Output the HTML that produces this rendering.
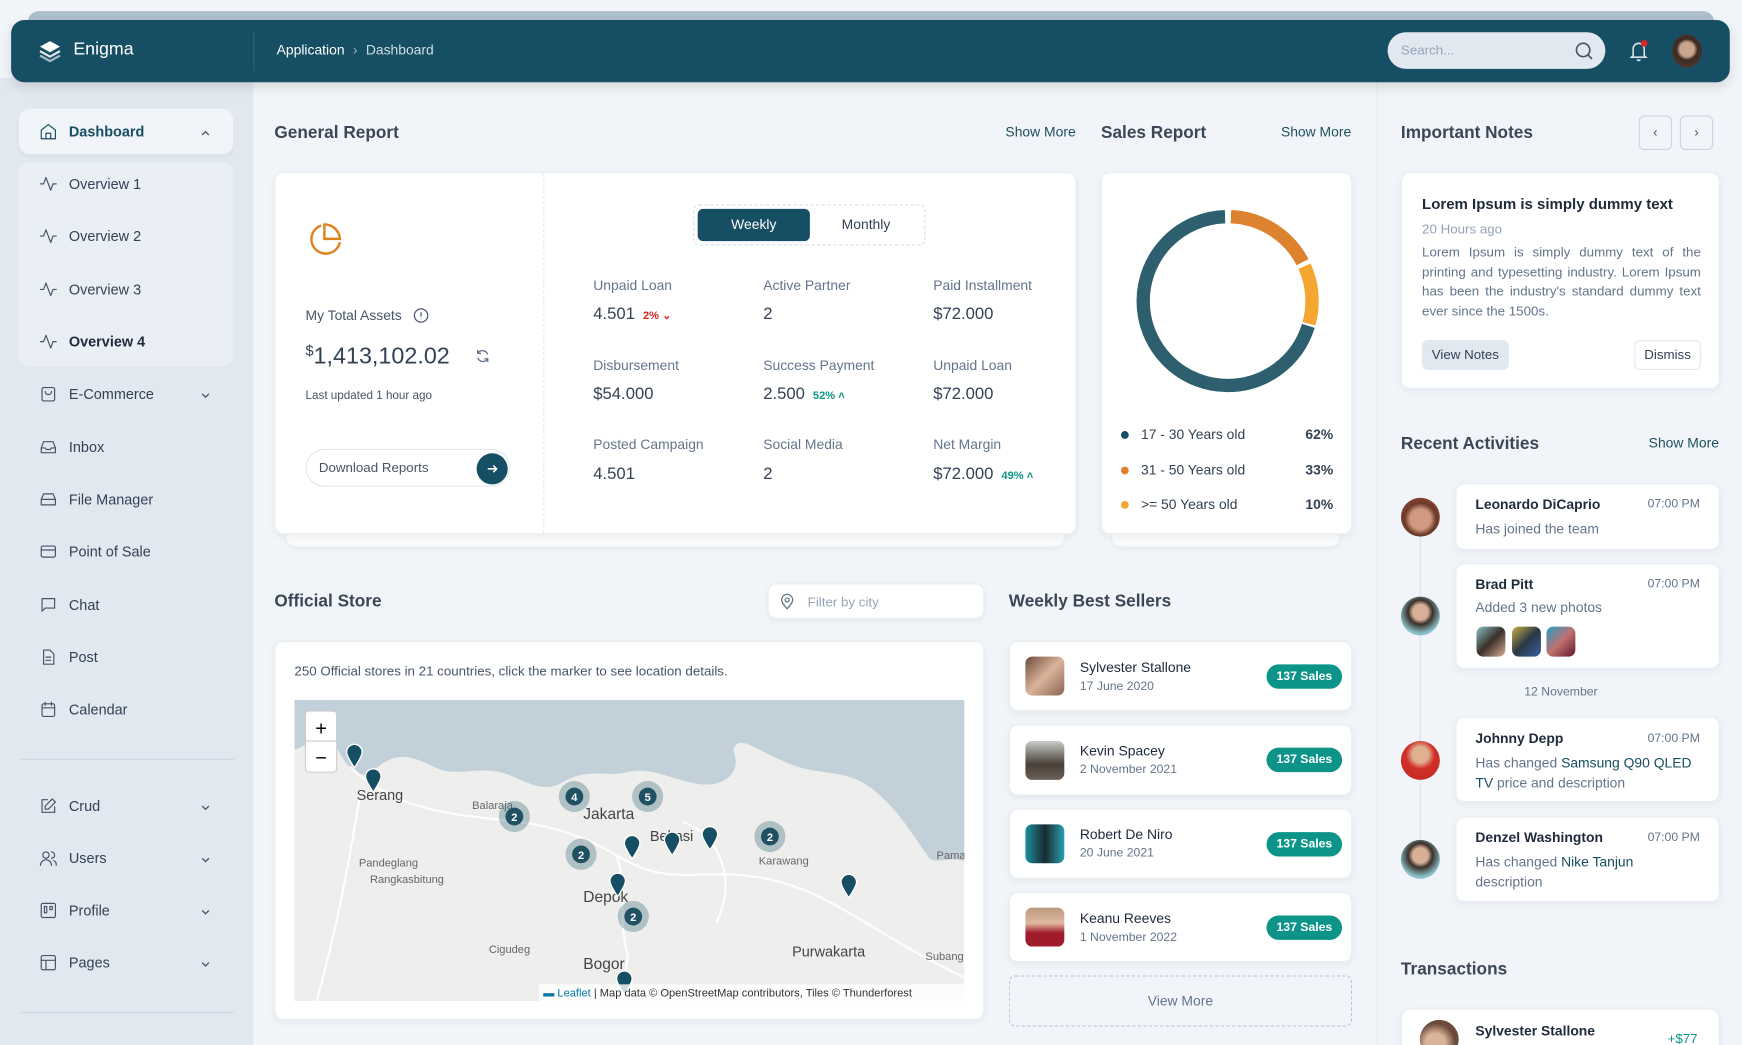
<!DOCTYPE html>
<html><head><meta charset="utf-8">
<style>
*{box-sizing:border-box;margin:0;padding:0}
html,body{width:1742px;height:1045px;overflow:hidden;background:#f1f5f9}
body{font-family:"Liberation Sans",sans-serif;color:#334155}
#s{position:absolute;left:0;top:0;width:1568px;height:941px;overflow:hidden;transform:scale(1.11097);transform-origin:0 0;background:#f1f5f9}
.a{position:absolute}
.card{position:absolute;background:#fff;border-radius:8px;box-shadow:0 2px 6px rgba(30,41,59,.06);border:1px solid #e9eef3}
.nav{position:absolute;left:35px;font-size:13px;color:#334155;display:flex;align-items:center;gap:10px}
.nav svg{width:17px;height:17px;fill:none;stroke:#475569;stroke-width:1.5;stroke-linecap:round;stroke-linejoin:round}
.chev{position:absolute;left:180px;width:10px;height:10px}
.h{font-size:15.5px;font-weight:bold;color:#3b4656}
.lnk{font-size:12.5px;color:#1e4e5f}
.lbl{font-size:12.5px;color:#64748b}
.val{font-size:15px;color:#334155}
.badge{position:absolute;background:#0d9488;color:#fff;font-size:11px;font-weight:bold;border-radius:12px;padding:5px 9px}
.av{position:absolute;border-radius:50%;overflow:hidden}
.ph{position:absolute;border-radius:6px}
</style></head><body>
<div id="s">
<div class="a" style="left:25px;top:10px;width:1518px;height:20px;background:#adbfca;border-radius:12px"></div>
<div class="a" style="left:0;top:70px;width:228px;height:871px;background:#e2e8f0"></div>
<div class="a" style="left:1239px;top:74px;width:1px;height:867px;background:#e5eaf0"></div>
<div class="a" style="left:10px;top:18px;width:1547px;height:56px;background:#164e63;border-radius:12px;box-shadow:0 4px 10px rgba(0,0,0,.12)"></div>
<svg class="a" style="left:34px;top:35px" width="22" height="22" viewBox="0 0 22 22"><path d="M11 2 L20 7 L11 12 L2 7Z" fill="#fff"/><path d="M2 11 L11 16 L20 11" stroke="#dfe7ea" stroke-width="2" fill="none"/><path d="M2 15 L11 20 L20 15" stroke="#a9bcc4" stroke-width="2" fill="none"/></svg>
<div class="a" style="left:66px;top:36px;font-size:16px;color:#fff">Enigma</div>
<div class="a" style="left:228px;top:28px;width:1px;height:36px;background:#2f6577"></div>
<div class="a" style="left:249px;top:38px;font-size:12.5px;color:#fff">Application <span style="color:#9fb6c0;margin:0 4px">›</span> <span style="color:#d2dde2">Dashboard</span></div>
<div class="a" style="left:1249px;top:29px;width:196px;height:33px;background:#e2e8f0;border-radius:17px"></div>
<div class="a" style="left:1261px;top:38px;font-size:12px;color:#94a3b8">Search...</div>
<svg class="a" style="left:1417px;top:37px" width="18" height="18" viewBox="0 0 18 18" fill="none" stroke="#475569" stroke-width="1.5"><circle cx="8" cy="8" r="6"/><path d="M12.5 12.5 L16 16"/></svg>
<svg class="a" style="left:1466px;top:36px" width="18" height="20" viewBox="0 0 18 20" fill="none" stroke="#dbe5ea" stroke-width="1.4"><path d="M4 14 V8 a5 5 0 0 1 10 0 V14 L15.5 15.5 H2.5Z"/><path d="M7.5 17.5 a1.7 1.7 0 0 0 3 0"/></svg>
<div class="a" style="left:1477px;top:36px;width:6px;height:6px;border-radius:50%;background:#dc2626"></div>
<div class="av" style="left:1505px;top:31px;width:27px;height:30px;background:radial-gradient(circle at 50% 45%,#caa48e 0 30%,#3b2a22 45%,#5a4436 100%)"></div>

<div class="a" style="left:17px;top:98px;width:193px;height:41px;background:#f1f5f9;border-radius:10px;box-shadow:0 2px 4px rgba(0,0,0,.04)"></div>
<div class="a" style="left:17px;top:146px;width:193px;height:184px;background:#eaeff5;border-radius:10px"></div>
<div class="nav" style="top:110px;color:#164e63;font-weight:bold"><svg viewBox="0 0 24 24" style="stroke:#164e63"><path d="M3 10 L12 3 L21 10 V21 H3Z"/><path d="M9 21 V14 H15 V21"/></svg>Dashboard</div>
<svg class="chev" style="top:115px" viewBox="0 0 10 10" fill="none" stroke="#475569" stroke-width="1.2"><path d="M2 6.5 L5 3.5 L8 6.5"/></svg>
<div class="nav" style="top:157px"><svg viewBox="0 0 24 24"><path d="M2 12 H6 L9 4 L15 20 L18 12 H22"/></svg>Overview 1</div>
<div class="nav" style="top:204px"><svg viewBox="0 0 24 24"><path d="M2 12 H6 L9 4 L15 20 L18 12 H22"/></svg>Overview 2</div>
<div class="nav" style="top:252px"><svg viewBox="0 0 24 24"><path d="M2 12 H6 L9 4 L15 20 L18 12 H22"/></svg>Overview 3</div>
<div class="nav" style="top:299px;font-weight:bold;color:#1e293b"><svg viewBox="0 0 24 24"><path d="M2 12 H6 L9 4 L15 20 L18 12 H22"/></svg>Overview 4</div>
<div class="nav" style="top:346px"><svg viewBox="0 0 24 24"><rect x="4" y="4" width="16" height="17" rx="2"/><path d="M8 9 a4 4 0 0 0 8 0"/></svg>E-Commerce</div>
<svg class="chev" style="top:351px" viewBox="0 0 10 10" fill="none" stroke="#475569" stroke-width="1.2"><path d="M2 3.5 L5 6.5 L8 3.5"/></svg>
<div class="nav" style="top:394px"><svg viewBox="0 0 24 24"><path d="M3 13 L6 5 H18 L21 13 V19 H3Z"/><path d="M3 13 H8 L9.5 15 H14.5 L16 13 H21"/></svg>Inbox</div>
<div class="nav" style="top:441px"><svg viewBox="0 0 24 24"><path d="M3 12 L6 5 H18 L21 12 V19 H3Z M3 12 H21"/></svg>File Manager</div>
<div class="nav" style="top:488px"><svg viewBox="0 0 24 24"><rect x="3" y="5" width="18" height="14" rx="2"/><path d="M3 10 H21"/></svg>Point of Sale</div>
<div class="nav" style="top:536px"><svg viewBox="0 0 24 24"><path d="M4 4 H20 V16 H8 L4 20Z"/></svg>Chat</div>
<div class="nav" style="top:583px"><svg viewBox="0 0 24 24"><path d="M6 3 H14 L19 8 V21 H6Z M9 12 H15 M9 16 H15"/></svg>Post</div>
<div class="nav" style="top:630px"><svg viewBox="0 0 24 24"><rect x="4" y="5" width="16" height="16" rx="2"/><path d="M4 10 H20 M8 3 V7 M16 3 V7"/></svg>Calendar</div>
<div class="a" style="left:18px;top:683px;width:193px;height:1px;background:#cfd8e3"></div>
<div class="nav" style="top:717px"><svg viewBox="0 0 24 24"><path d="M20 13 V20 H4 V4 H11"/><path d="M17 3 L21 7 L12 16 H8 V12Z"/></svg>Crud</div>
<svg class="chev" style="top:722px" viewBox="0 0 10 10" fill="none" stroke="#475569" stroke-width="1.2"><path d="M2 3.5 L5 6.5 L8 3.5"/></svg>
<div class="nav" style="top:764px"><svg viewBox="0 0 24 24"><circle cx="9" cy="8" r="4"/><path d="M2 21 a7 7 0 0 1 14 0 M16 4 a4 4 0 0 1 0 8 M19 15 a6 6 0 0 1 3 6"/></svg>Users</div>
<svg class="chev" style="top:769px" viewBox="0 0 10 10" fill="none" stroke="#475569" stroke-width="1.2"><path d="M2 3.5 L5 6.5 L8 3.5"/></svg>
<div class="nav" style="top:811px"><svg viewBox="0 0 24 24"><rect x="3" y="3" width="18" height="18" rx="2"/><path d="M7 7 V15 H10 V7Z M14 7 V11 H17 V7Z"/></svg>Profile</div>
<svg class="chev" style="top:816px" viewBox="0 0 10 10" fill="none" stroke="#475569" stroke-width="1.2"><path d="M2 3.5 L5 6.5 L8 3.5"/></svg>
<div class="nav" style="top:858px"><svg viewBox="0 0 24 24"><rect x="3" y="3" width="18" height="18" rx="2"/><path d="M3 9 H21 M9 9 V21"/></svg>Pages</div>
<svg class="chev" style="top:863px" viewBox="0 0 10 10" fill="none" stroke="#475569" stroke-width="1.2"><path d="M2 3.5 L5 6.5 L8 3.5"/></svg>
<div class="a" style="left:18px;top:911px;width:193px;height:1px;background:#cfd8e3"></div>

<div class="a h" style="left:247px;top:111px">General Report</div>
<div class="a lnk" style="left:905px;top:112px">Show More</div>
<div class="a" style="left:258px;top:470px;width:700px;height:22px;background:#f8fafc;border-radius:8px;box-shadow:0 2px 4px rgba(0,0,0,.05)"></div>
<div class="card" style="left:247px;top:155px;width:722px;height:326px"></div>
<div class="a" style="left:489px;top:156px;width:0;height:324px;border-left:1px dashed #e2e8f0"></div>
<svg class="a" style="left:276px;top:199px" width="34" height="34" viewBox="0 0 34 34" fill="none" stroke="#e0821e" stroke-width="2.2"><path d="M13 4 A13 13 0 1 0 30 19"/><path d="M16 3 A14 14 0 0 1 30 16 H16Z"/></svg>
<div class="a" style="left:275px;top:277px;font-size:12.5px;color:#475569">My Total Assets</div>
<svg class="a" style="left:372px;top:277px" width="14" height="14" viewBox="0 0 14 14" fill="none" stroke="#475569" stroke-width="1.1"><circle cx="7" cy="7" r="6"/><path d="M7 4 V8 M7 9.8 V10.3"/></svg>
<div class="a" style="left:275px;top:308px;font-size:21px;color:#334155"><sup style="font-size:13px;vertical-align:7px">$</sup>1,413,102.02</div>
<svg class="a" style="left:427px;top:313px" width="15" height="15" viewBox="0 0 15 15" fill="none" stroke="#64748b" stroke-width="1.2"><path d="M12 6 A5 5 0 0 0 3 5 M3 2 V5 H6 M3 9 A5 5 0 0 0 12 10 M12 13 V10 H9"/></svg>
<div class="a" style="left:275px;top:350px;font-size:10.5px;color:#475569">Last updated 1 hour ago</div>
<div class="a" style="left:275px;top:404px;width:184px;height:34px;border:1px solid #e2e8f0;border-radius:17px"></div>
<div class="a" style="left:287px;top:414px;font-size:12px;color:#475569">Download Reports</div>
<div class="a" style="left:429px;top:408px;width:28px;height:28px;border-radius:50%;background:#164e63"></div>
<svg class="a" style="left:437px;top:416px" width="12" height="12" viewBox="0 0 12 12" fill="none" stroke="#fff" stroke-width="1.4"><path d="M2 6 H10 M7 3 L10 6 L7 9"/></svg>
<div class="a" style="left:624px;top:184px;width:209px;height:37px;border:1px dashed #d6dee8;border-radius:5px"></div>
<div class="a" style="left:628px;top:188px;width:101px;height:29px;background:#164e63;border-radius:5px;color:#fff;font-size:12.5px;text-align:center;line-height:29px">Weekly</div>
<div class="a" style="left:729px;top:188px;width:101px;height:29px;color:#334155;font-size:12.5px;text-align:center;line-height:29px">Monthly</div>

<div class="a lbl" style="left:534px;top:250px">Unpaid Loan</div>
<div class="a val" style="left:534px;top:274px">4.501 <span style="color:#dc2626;font-size:10px;font-weight:bold;margin-left:3px">2% ⌄</span></div>
<div class="a lbl" style="left:687px;top:250px">Active Partner</div>
<div class="a val" style="left:687px;top:274px">2</div>
<div class="a lbl" style="left:840px;top:250px">Paid Installment</div>
<div class="a val" style="left:840px;top:274px">$72.000</div>
<div class="a lbl" style="left:534px;top:322px">Disbursement</div>
<div class="a val" style="left:534px;top:346px">$54.000</div>
<div class="a lbl" style="left:687px;top:322px">Success Payment</div>
<div class="a val" style="left:687px;top:346px">2.500 <span style="color:#0d9488;font-size:10px;font-weight:bold;margin-left:3px">52% ˄</span></div>
<div class="a lbl" style="left:840px;top:322px">Unpaid Loan</div>
<div class="a val" style="left:840px;top:346px">$72.000</div>
<div class="a lbl" style="left:534px;top:393px">Posted Campaign</div>
<div class="a val" style="left:534px;top:418px">4.501</div>
<div class="a lbl" style="left:687px;top:393px">Social Media</div>
<div class="a val" style="left:687px;top:418px">2</div>
<div class="a lbl" style="left:840px;top:393px">Net Margin</div>
<div class="a val" style="left:840px;top:418px">$72.000 <span style="color:#0d9488;font-size:10px;font-weight:bold;margin-left:3px">49% ˄</span></div>

<div class="a h" style="left:991px;top:111px">Sales Report</div>
<div class="a lnk" style="left:1153px;top:112px">Show More</div>
<div class="a" style="left:1001px;top:470px;width:205px;height:22px;background:#f8fafc;border-radius:8px;box-shadow:0 2px 4px rgba(0,0,0,.05)"></div>
<div class="card" style="left:991px;top:155px;width:226px;height:326px"></div>
<svg class="a" style="left:1020px;top:186px" width="170" height="170" viewBox="0 0 170 170">
<g transform="rotate(-90 85 85)" fill="none" stroke-width="12">
<circle cx="85" cy="85" r="76" stroke="#2d5f6e" stroke-dasharray="333 478" stroke-dashoffset="-142"/>
<circle cx="85" cy="85" r="76" stroke="#dd8330" stroke-dasharray="80 478" stroke-dashoffset="-3"/>
<circle cx="85" cy="85" r="76" stroke="#f5a631" stroke-dasharray="53 478" stroke-dashoffset="-87"/>
</g></svg>
<div class="a" style="left:1009px;top:388px;width:7px;height:7px;border-radius:50%;background:#164e63"></div>
<div class="a" style="left:1027px;top:384px;font-size:12.5px">17 - 30 Years old</div>
<div class="a" style="left:1175px;top:384px;font-size:12.5px;font-weight:bold">62%</div>
<div class="a" style="left:1009px;top:420px;width:7px;height:7px;border-radius:50%;background:#dd8330"></div>
<div class="a" style="left:1027px;top:416px;font-size:12.5px">31 - 50 Years old</div>
<div class="a" style="left:1175px;top:416px;font-size:12.5px;font-weight:bold">33%</div>
<div class="a" style="left:1009px;top:451px;width:7px;height:7px;border-radius:50%;background:#f5a631"></div>
<div class="a" style="left:1027px;top:447px;font-size:12.5px">&gt;= 50 Years old</div>
<div class="a" style="left:1175px;top:447px;font-size:12.5px;font-weight:bold">10%</div>

<div class="a h" style="left:247px;top:533px">Official Store</div>
<div class="card" style="left:691px;top:525px;width:195px;height:32px"></div>
<svg class="a" style="left:702px;top:534px" width="13" height="15" viewBox="0 0 13 15" fill="none" stroke="#64748b" stroke-width="1.1"><path d="M6.5 14 C2 9 1.5 7.5 1.5 6 a5 5 0 0 1 10 0 c0 1.5-.5 3-5 8Z"/><circle cx="6.5" cy="6" r="1.8"/></svg>
<div class="a" style="left:727px;top:535px;font-size:12px;color:#94a3b8">Filter by city</div>
<div class="card" style="left:247px;top:577px;width:639px;height:341px"></div>
<div class="a" style="left:265px;top:597px;font-size:12px;color:#475569">250 Official stores in 21 countries, click the marker to see location details.</div>
<svg class="a" style="left:265px;top:630px" width="603" height="271" viewBox="0 0 603 271">
<rect width="603" height="271" fill="#eeeeec"/>
<path d="M0 0 H603 V145 C585 140 575 150 570 140 C555 120 545 100 520 80 C495 60 470 70 440 55 C415 45 400 30 395 45 C405 70 380 80 360 75 C335 70 320 60 300 65 C280 70 265 60 240 75 C220 85 205 70 185 65 C160 60 145 70 125 60 C105 50 90 45 70 65 C55 75 40 50 35 35 C25 25 15 40 0 45Z" fill="#c1d0d9"/>
<g stroke="#fff" stroke-width="2" fill="none" opacity=".9"><path d="M50 60 C80 90 120 100 160 105 S240 110 290 140 S360 150 420 160 S520 210 603 250"/><path d="M290 140 C300 170 290 190 300 230 L295 271"/><path d="M60 80 C50 140 40 200 20 271"/><path d="M350 110 C380 120 400 160 380 200"/></g>
<g font-family="Liberation Sans,sans-serif" fill="#444"><text x="56" y="90" font-size="13">Serang</text><text x="260" y="107" font-size="14">Jakarta</text><text x="320" y="127" font-size="13">Bekasi</text><text x="260" y="182" font-size="14">Depok</text><text x="260" y="242" font-size="14">Bogor</text><text x="448" y="231" font-size="13">Purwakarta</text><text x="160" y="98" font-size="10" fill="#666">Balaraja</text><text x="58" y="150" font-size="10" fill="#666">Pandeglang</text><text x="68" y="165" font-size="10" fill="#666">Rangkasbitung</text><text x="175" y="228" font-size="10" fill="#666">Cigudeg</text><text x="418" y="148" font-size="10" fill="#666">Karawang</text><text x="578" y="143" font-size="10" fill="#666">Pama</text><text x="568" y="234" font-size="10" fill="#666">Subang</text></g>
<g fill="#3c6e80"><circle cx="198" cy="105" r="14" opacity=".35"/><circle cx="252" cy="87" r="14" opacity=".35"/><circle cx="318" cy="87" r="14" opacity=".35"/><circle cx="258" cy="139" r="14" opacity=".35"/><circle cx="428" cy="123" r="14" opacity=".35"/><circle cx="305" cy="195" r="14" opacity=".35"/></g>
<g fill="#1f5163"><circle cx="198" cy="105" r="8"/><circle cx="252" cy="87" r="8"/><circle cx="318" cy="87" r="8"/><circle cx="258" cy="139" r="8"/><circle cx="428" cy="123" r="8"/><circle cx="305" cy="195" r="8"/></g>
<g fill="#fff" font-family="Liberation Sans,sans-serif" font-size="10" font-weight="bold" text-anchor="middle"><text x="198" y="109">2</text><text x="252" y="91">4</text><text x="318" y="91">5</text><text x="258" y="143">2</text><text x="428" y="127">2</text><text x="305" y="199">2</text></g>
<g fill="#164e63" stroke="#fff" stroke-width="1.2"><path d="M54 40 a7 7 0 0 1 7 7 c0 4-7 14-7 14 s-7-10-7-14 a7 7 0 0 1 7-7Z"/><path d="M71 62 a7 7 0 0 1 7 7 c0 4-7 14-7 14 s-7-10-7-14 a7 7 0 0 1 7-7Z"/><path d="M304 122 a7 7 0 0 1 7 7 c0 4-7 14-7 14 s-7-10-7-14 a7 7 0 0 1 7-7Z"/><path d="M340 119 a7 7 0 0 1 7 7 c0 4-7 14-7 14 s-7-10-7-14 a7 7 0 0 1 7-7Z"/><path d="M374 114 a7 7 0 0 1 7 7 c0 4-7 14-7 14 s-7-10-7-14 a7 7 0 0 1 7-7Z"/><path d="M291 156 a7 7 0 0 1 7 7 c0 4-7 14-7 14 s-7-10-7-14 a7 7 0 0 1 7-7Z"/><path d="M499 157 a7 7 0 0 1 7 7 c0 4-7 14-7 14 s-7-10-7-14 a7 7 0 0 1 7-7Z"/><path d="M297 244 a7 7 0 0 1 7 7 c0 4-7 14-7 14 s-7-10-7-14 a7 7 0 0 1 7-7Z"/></g>
<rect x="10" y="10" width="28" height="55" rx="3" fill="#fff" stroke="#ccc"/><line x1="10" y1="37" x2="38" y2="37" stroke="#ccc"/>
<text x="24" y="32" font-family="Liberation Sans,sans-serif" font-size="18" text-anchor="middle" fill="#000">+</text><text x="24" y="58" font-family="Liberation Sans,sans-serif" font-size="18" text-anchor="middle" fill="#000">−</text>
<rect x="220" y="256" width="383" height="15" fill="#fff" opacity=".8"/>
<text x="224" y="267" font-family="Liberation Sans,sans-serif" font-size="10" fill="#333"><tspan fill="#0078a8">▬ Leaflet</tspan> | Map data © OpenStreetMap contributors, Tiles © Thunderforest</text>
</svg>

<div class="a h" style="left:908px;top:533px">Weekly Best Sellers</div>
<div class="card" style="left:908px;top:577px;width:309px;height:63px"></div>
<div class="ph" style="left:923px;top:591px;width:35px;height:35px;background:linear-gradient(135deg,#6b4a3a,#d9b39a 50%,#8a6450)"></div>
<div class="a" style="left:972px;top:594px;font-size:12.5px;color:#1e293b">Sylvester Stallone</div>
<div class="a" style="left:972px;top:612px;font-size:11px;color:#64748b">17 June 2020</div>
<div class="badge" style="left:1140px;top:598px">137 Sales</div>
<div class="card" style="left:908px;top:652px;width:309px;height:64px"></div>
<div class="ph" style="left:923px;top:667px;width:35px;height:35px;background:linear-gradient(180deg,#c8ccc8,#4a4038 60%,#6a6058)"></div>
<div class="a" style="left:972px;top:669px;font-size:12.5px;color:#1e293b">Kevin Spacey</div>
<div class="a" style="left:972px;top:687px;font-size:11px;color:#64748b">2 November 2021</div>
<div class="badge" style="left:1140px;top:673px">137 Sales</div>
<div class="card" style="left:908px;top:728px;width:309px;height:63px"></div>
<div class="ph" style="left:923px;top:742px;width:35px;height:35px;background:linear-gradient(90deg,#1b8fa0,#1a2a30 50%,#2aa0b0)"></div>
<div class="a" style="left:972px;top:744px;font-size:12.5px;color:#1e293b">Robert De Niro</div>
<div class="a" style="left:972px;top:762px;font-size:11px;color:#64748b">20 June 2021</div>
<div class="badge" style="left:1140px;top:749px">137 Sales</div>
<div class="card" style="left:908px;top:803px;width:309px;height:63px"></div>
<div class="ph" style="left:923px;top:817px;width:35px;height:35px;background:linear-gradient(180deg,#b89a80,#e0b8a0 40%,#a01c2c 65%)"></div>
<div class="a" style="left:972px;top:820px;font-size:12.5px;color:#1e293b">Keanu Reeves</div>
<div class="a" style="left:972px;top:838px;font-size:11px;color:#64748b">1 November 2022</div>
<div class="badge" style="left:1140px;top:824px">137 Sales</div>
<div class="a" style="left:908px;top:878px;width:309px;height:46px;border:1px dashed #b8c4d2;border-radius:6px;text-align:center;line-height:44px;font-size:12.5px;color:#64748b">View More</div>

<div class="a h" style="left:1261px;top:111px">Important Notes</div>
<div class="a" style="left:1475px;top:104px;width:30px;height:31px;border:1px solid #cbd5e1;border-radius:5px;text-align:center;line-height:29px;font-size:12px;color:#475569">‹</div>
<div class="a" style="left:1512px;top:104px;width:30px;height:31px;border:1px solid #cbd5e1;border-radius:5px;text-align:center;line-height:29px;font-size:12px;color:#475569">›</div>
<div class="card" style="left:1261px;top:155px;width:287px;height:195px"></div>
<div class="a" style="left:1280px;top:176px;font-size:13.5px;font-weight:bold;color:#1e293b">Lorem Ipsum is simply dummy text</div>
<div class="a" style="left:1280px;top:199px;font-size:12px;color:#94a3b8">20 Hours ago</div>
<div class="a" style="left:1280px;top:219px;width:251px;font-size:12px;line-height:17.5px;color:#64748b;text-align:justify">Lorem Ipsum is simply dummy text of the printing and typesetting industry. Lorem Ipsum has been the industry's standard dummy text ever since the 1500s.</div>
<div class="a" style="left:1280px;top:306px;width:78px;height:27px;background:#e2e8f0;border-radius:5px;text-align:center;line-height:27px;font-size:12px;color:#334155">View Notes</div>
<div class="a" style="left:1471px;top:306px;width:60px;height:27px;border:1px solid #e2e8f0;border-radius:5px;text-align:center;line-height:25px;font-size:12px;color:#334155">Dismiss</div>

<div class="a h" style="left:1261px;top:391px">Recent Activities</div>
<div class="a lnk" style="left:1484px;top:392px">Show More</div>
<div class="a" style="left:1278px;top:470px;width:1px;height:320px;background:#dbe3ec"></div>
<div class="av" style="left:1261px;top:448px;width:35px;height:35px;background:radial-gradient(circle at 50% 55%,#d09a80 0 35%,#6a3a28 55%,#b05040 100%)"></div>
<div class="card" style="left:1310px;top:435px;width:238px;height:60px"></div>
<div class="a" style="left:1328px;top:447px;font-size:12.5px;font-weight:bold;color:#1e293b">Leonardo DiCaprio</div>
<div class="a" style="left:1483px;top:448px;font-size:11px;color:#64748b">07:00 PM</div>
<div class="a" style="left:1328px;top:469px;font-size:12.5px;color:#64748b">Has joined the team</div>
<div class="av" style="left:1261px;top:537px;width:35px;height:35px;background:radial-gradient(circle at 50% 40%,#d8b098 0 25%,#3a3028 40%,#8ac0c8 70%)"></div>
<div class="card" style="left:1310px;top:507px;width:238px;height:95px"></div>
<div class="a" style="left:1328px;top:519px;font-size:12.5px;font-weight:bold;color:#1e293b">Brad Pitt</div>
<div class="a" style="left:1483px;top:520px;font-size:11px;color:#64748b">07:00 PM</div>
<div class="a" style="left:1328px;top:540px;font-size:12.5px;color:#64748b">Added 3 new photos</div>
<div class="ph" style="left:1329px;top:564px;width:26px;height:27px;background:linear-gradient(135deg,#8ac0c8,#3a3028 50%,#d8b098)"></div>
<div class="ph" style="left:1361px;top:564px;width:26px;height:27px;background:linear-gradient(135deg,#c8b040,#2a3848 50%,#3a60a0)"></div>
<div class="ph" style="left:1392px;top:564px;width:26px;height:27px;background:linear-gradient(135deg,#20a0c8,#c07070 50%,#601828)"></div>
<div class="a" style="left:1372px;top:617px;font-size:11px;color:#64748b">12 November</div>
<div class="av" style="left:1261px;top:667px;width:35px;height:35px;background:radial-gradient(circle at 50% 35%,#e0b090 0 25%,#d03028 45%,#c02820 100%)"></div>
<div class="card" style="left:1310px;top:645px;width:238px;height:77px"></div>
<div class="a" style="left:1328px;top:658px;font-size:12.5px;font-weight:bold;color:#1e293b">Johnny Depp</div>
<div class="a" style="left:1483px;top:659px;font-size:11px;color:#64748b">07:00 PM</div>
<div class="a" style="left:1328px;top:678px;width:205px;font-size:12.5px;line-height:18px;color:#64748b">Has changed <span style="color:#164e63">Samsung Q90 QLED TV</span> price and description</div>
<div class="av" style="left:1261px;top:756px;width:35px;height:35px;background:radial-gradient(circle at 50% 40%,#d8b098 0 25%,#3a3028 40%,#8ac0c8 70%)"></div>
<div class="card" style="left:1310px;top:735px;width:238px;height:77px"></div>
<div class="a" style="left:1328px;top:747px;font-size:12.5px;font-weight:bold;color:#1e293b">Denzel Washington</div>
<div class="a" style="left:1483px;top:748px;font-size:11px;color:#64748b">07:00 PM</div>
<div class="a" style="left:1328px;top:767px;width:205px;font-size:12.5px;line-height:18px;color:#64748b">Has changed <span style="color:#164e63">Nike Tanjun</span> description</div>

<div class="a h" style="left:1261px;top:864px">Transactions</div>
<div class="card" style="left:1261px;top:908px;width:287px;height:60px"></div>
<div class="av" style="left:1278px;top:918px;width:35px;height:35px;background:radial-gradient(circle at 40% 60%,#d9b39a 0 30%,#6b4a3a 60%)"></div>
<div class="a" style="left:1328px;top:921px;font-size:12.5px;font-weight:bold;color:#1e293b">Sylvester Stallone</div>
<div class="a" style="left:1501px;top:928px;font-size:12px;color:#0d9488">+$77</div>
</div>
</body></html>
